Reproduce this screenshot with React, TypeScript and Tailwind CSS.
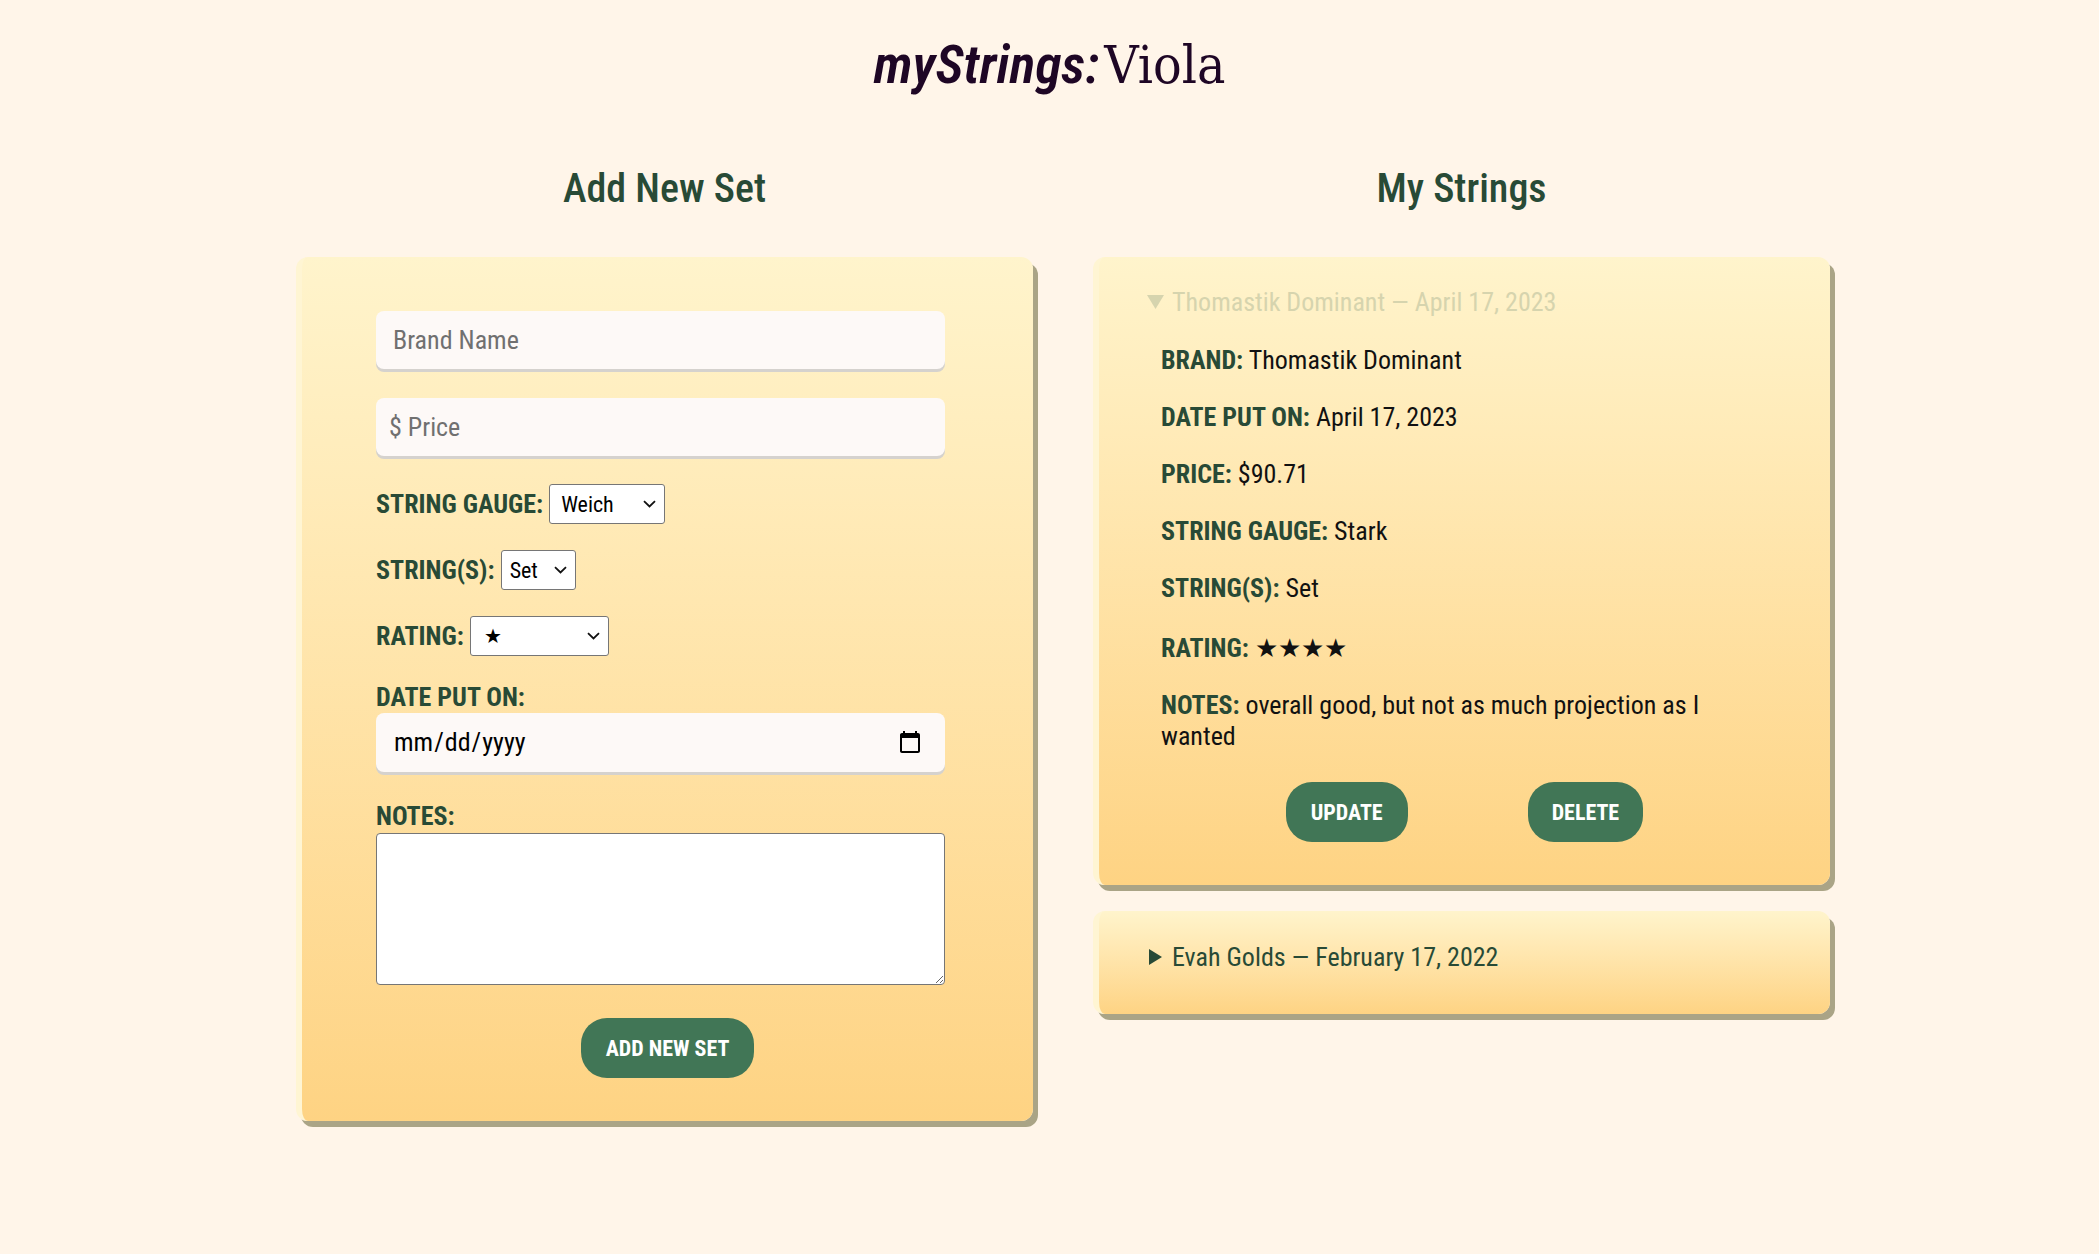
import React from 'react';

// condensed body font used across the page
const bodyFont =
  "font-[family-name:'Roboto_Condensed','Liberation_Sans_Narrow',Roboto,sans-serif] font-stretch-condensed";

const cardClass =
  'rounded-[12px] border-l-[6px] border-l-[#fff5d3] bg-linear-to-b from-[#fff4cc] to-[#fed383] shadow-[5px_6px_0_#aaa486]';

function Chevron() {
  return (
    <svg
      className="pointer-events-none absolute right-[9px] top-1/2 -translate-y-1/2"
      width="13"
      height="8"
      viewBox="0 0 13 8"
      fill="none"
    >
      <path d="M1 1.2L6.5 6.5L12 1.2" stroke="#111" strokeWidth="1.8" />
    </svg>
  );
}

function FieldRow({
  label,
  children,
}: {
  label: string;
  children: React.ReactNode;
}) {
  return (
    <div className="flex items-center gap-[6px]">
      <span className="text-[26px] font-bold leading-[30px] text-[#284a36]">{label}</span>
      {children}
    </div>
  );
}

function Detail({
  label,
  value,
  className = '',
}: {
  label: string;
  value: string;
  className?: string;
}) {
  return (
    <p className={`text-[26px] leading-[31px] text-[#111] ${className}`}>
      <span className="font-bold text-[#284a36]">{label}</span> {value}
    </p>
  );
}

function Triangle({ open, color }: { open: boolean; color: string }) {
  return open ? (
    <svg width="17" height="14" viewBox="0 0 17 14" className="shrink-0">
      <path d="M0 0H17L8.5 14Z" fill={color} />
    </svg>
  ) : (
    <svg width="13" height="16" viewBox="0 0 13 16" className="ml-[2px] mr-[2px] shrink-0">
      <path d="M0 0L13 8L0 16Z" fill={color} />
    </svg>
  );
}

function AddSetForm() {
  return (
    <div className={`${cardClass} pb-[43px] pl-[74px] pt-[54px]`}>
      <div className="flex w-[569px] flex-col">
        <input
          placeholder="Brand Name"
          className="h-[58px] rounded-[8px] bg-[#fdf9f7] px-[17px] text-[26px] text-black shadow-[0_3px_0_#d5d2ce] outline-none placeholder:text-[#707070]"
        />
        <input
          placeholder="$ Price"
          className="mt-[29px] h-[58px] rounded-[8px] bg-[#fdf9f7] px-[13px] text-[26px] text-black shadow-[0_3px_0_#d5d2ce] outline-none placeholder:text-[#707070]"
        />

        <div className="mt-[28px] flex flex-col gap-[26px]">
          <FieldRow label="STRING GAUGE:">
            <div className="relative">
              <select
                defaultValue="Weich"
                className="h-[40px] w-[116px] appearance-none rounded-[3px] border border-[#767676] bg-white pl-[11px] text-[22px] text-black"
              >
                <option>Weich</option>
                <option>Mittel</option>
                <option>Stark</option>
              </select>
              <Chevron />
            </div>
          </FieldRow>
          <FieldRow label="STRING(S):">
            <div className="relative">
              <select
                defaultValue="Set"
                className="h-[40px] w-[75px] appearance-none rounded-[3px] border border-[#767676] bg-white pl-[8px] text-[22px] text-black"
              >
                <option>Set</option>
                <option>A</option>
                <option>D</option>
                <option>G</option>
                <option>C</option>
              </select>
              <Chevron />
            </div>
          </FieldRow>
          <FieldRow label="RATING:">
            <div className="relative">
              <select
                defaultValue="1"
                className="h-[40px] w-[139px] appearance-none rounded-[3px] border border-[#767676] bg-white pl-[13px] text-[20px] text-black"
              >
                <option value="1">★</option>
                <option value="2">★★</option>
                <option value="3">★★★</option>
                <option value="4">★★★★</option>
                <option value="5">★★★★★</option>
              </select>
              <Chevron />
            </div>
          </FieldRow>
        </div>

        <label className="mt-[26px] text-[26px] font-bold leading-[30px] text-[#284a36]">
          DATE PUT ON:
        </label>
        <input
          type="date"
          className="mt-px h-[59px] rounded-[8px] bg-[#fdf9f7] pl-[17px] pr-[20px] text-[26px] text-black shadow-[0_3px_0_#d5d2ce] outline-none"
        />

        <label className="mt-[29px] text-[26px] font-bold leading-[30px] text-[#284a36]">
          NOTES:
        </label>
        <textarea className="mt-[2px] h-[152px] rounded-[4px] border border-[#767676] bg-white p-[6px] text-[22px] text-black" />

        <div className="mt-[33px] flex justify-center pl-[14px]">
          <button className="h-[60px] rounded-[26px] bg-[#417656] px-[25px] text-[22px] font-bold text-white">
            ADD NEW SET
          </button>
        </div>
      </div>
    </div>
  );
}

function StringCards() {
  return (
    <div className="flex flex-col">
      <div className={`${cardClass} pb-[43px] pt-[30px]`}>
        <div className="flex h-[30px] items-center gap-[8px] pl-[48px] text-[26px] text-[#d6d4ae]">
          <Triangle open color="#d6d4ae" />
          <span>Thomastik Dominant — April 17, 2023</span>
        </div>
        <div className="mt-[28px] flex flex-col gap-[26px] pl-[62px] pr-[66px]">
          <Detail label="BRAND:" value="Thomastik Dominant" />
          <Detail label="DATE PUT ON:" value="April 17, 2023" />
          <Detail label="PRICE:" value="$90.71" />
          <Detail label="STRING GAUGE:" value="Stark" />
          <Detail label="STRING(S):" value="Set" />
          <Detail label="RATING:" value="★★★★" className="mt-[3px]" />
          <Detail label="NOTES:" value="overall good, but not as much projection as I wanted" />
        </div>
        <div className="mt-[30px] flex justify-center gap-[120px]">
          <button className="h-[60px] rounded-[26px] bg-[#417656] px-[25px] text-[22px] font-bold text-white">
            UPDATE
          </button>
          <button className="h-[60px] rounded-[26px] bg-[#417656] px-[24px] text-[22px] font-bold text-white">
            DELETE
          </button>
        </div>
      </div>

      <div className={`${cardClass} mt-[26px] pb-[42px] pt-[31px]`}>
        <div className="flex h-[30px] items-center gap-[8px] pl-[48px] text-[26px] text-[#284a36]">
          <Triangle open={false} color="#284a36" />
          <span>Evah Golds — February 17, 2022</span>
        </div>
      </div>
    </div>
  );
}

export default function App() {
  return (
    <div className={`min-h-screen bg-[#fff5e9] pb-[110px] pt-[31px] ${bodyFont}`}>
      {/* Title */}
      <h1 className="flex h-[67px] items-center justify-center gap-[5px] text-[#1e0625]">
        <span className="text-[54px] font-semibold italic leading-[67px]">myStrings:</span>
        <span className="font-[family-name:'DejaVu_Serif',serif] text-[53px] font-normal leading-[67px]">
          Viola
        </span>
      </h1>

      <div className="mt-[67px] flex gap-[60px] pl-[296px]">
        {/* Left column */}
        <div className="w-[737px]">
          <h2 className="mb-[44px] text-center text-[40px] font-medium leading-[48px] text-[#284a36]">
            Add New Set
          </h2>
          <AddSetForm />
        </div>

        {/* Right column */}
        <div className="w-[737px]">
          <h2 className="mb-[44px] text-center text-[40px] font-medium leading-[48px] text-[#284a36]">
            My Strings
          </h2>
          <StringCards />
        </div>
      </div>
    </div>
  );
}
